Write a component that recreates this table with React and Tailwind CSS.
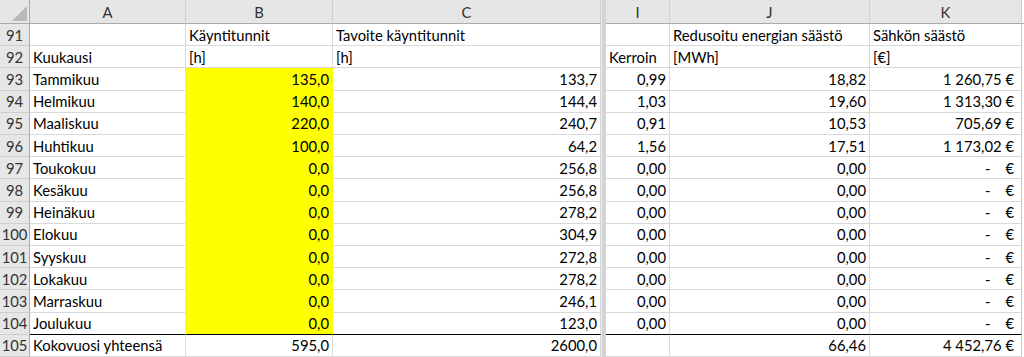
import React from 'react';

const cols = 'grid grid-cols-[30px_156px_147px_268px_5px_64px_200px_152px_2px]';

const rows = [
  { n: 91, a: '', b: 'Käyntitunnit', c: 'Tavoite käyntitunnit', i: '', j: 'Redusoitu energian säästö', k: 'Sähkön säästö', text: true },
  { n: 92, a: 'Kuukausi', b: '[h]', c: '[h]', i: 'Kerroin', j: '[MWh]', k: '[€]', text: true },
  { n: 93, a: 'Tammikuu', b: '135,0', c: '133,7', i: '0,99', j: '18,82', k: '1 260,75 €', fill: true },
  { n: 94, a: 'Helmikuu', b: '140,0', c: '144,4', i: '1,03', j: '19,60', k: '1 313,30 €', fill: true },
  { n: 95, a: 'Maaliskuu', b: '220,0', c: '240,7', i: '0,91', j: '10,53', k: '705,69 €', fill: true },
  { n: 96, a: 'Huhtikuu', b: '100,0', c: '64,2', i: '1,56', j: '17,51', k: '1 173,02 €', fill: true },
  { n: 97, a: 'Toukokuu', b: '0,0', c: '256,8', i: '0,00', j: '0,00', k: '-', fill: true },
  { n: 98, a: 'Kesäkuu', b: '0,0', c: '256,8', i: '0,00', j: '0,00', k: '-', fill: true },
  { n: 99, a: 'Heinäkuu', b: '0,0', c: '278,2', i: '0,00', j: '0,00', k: '-', fill: true },
  { n: 100, a: 'Elokuu', b: '0,0', c: '304,9', i: '0,00', j: '0,00', k: '-', fill: true },
  { n: 101, a: 'Syyskuu', b: '0,0', c: '272,8', i: '0,00', j: '0,00', k: '-', fill: true },
  { n: 102, a: 'Lokakuu', b: '0,0', c: '278,2', i: '0,00', j: '0,00', k: '-', fill: true },
  { n: 103, a: 'Marraskuu', b: '0,0', c: '246,1', i: '0,00', j: '0,00', k: '-', fill: true },
  { n: 104, a: 'Joulukuu', b: '0,0', c: '123,0', i: '0,00', j: '0,00', k: '-', fill: true, thick: true },
  { n: 105, a: 'Kokovuosi yhteensä', b: '595,0', c: '2600,0', i: '', j: '66,46', k: '4 452,76 €' },
];

const Divider = () => (
  <div className="bg-[#d4d4d4] border-l border-[#e8e8e8]"></div>
);

const Cell = ({ children, right, className = '' }) => (
  <div
    className={`flex items-center overflow-hidden whitespace-nowrap border-r border-b px-[3px] ${
      right ? 'justify-end' : 'justify-start'
    } ${className}`}
  >
    {children}
  </div>
);

const Euro = ({ v }) => {
  if (v === '-') {
    return (
      <span className="flex w-full justify-end">
        <span className="mr-[15px]">-</span>
        <span className="mr-[4px]">€</span>
      </span>
    );
  }
  return <span className="mr-[4px]">{v}</span>;
};

export default function App() {
  return (
    <div
      className="w-[1024px] h-[357px] overflow-hidden bg-white flex flex-col text-[14.8px] leading-[18px] text-black"
      style={{ fontFamily: 'Lato, "Liberation Sans", sans-serif' }}
    >
      {/* column headers */}
      <div className={`${cols} h-[24px] shrink-0 bg-[#e6e6e6] text-[#333]`}>
        <div className="relative border-r border-b border-[#ababab]">
          <svg className="absolute right-[2px] bottom-[2px]" width="15" height="15" viewBox="0 0 15 15">
            <polygon points="15,0 15,15 0,15" fill="#b8b8b8" />
          </svg>
        </div>
        {['A', 'B', 'C'].map((l) => (
          <div key={l} className="flex items-center justify-center border-r border-b border-r-[#cfcfcf] border-b-[#ababab]">
            {l}
          </div>
        ))}
        <Divider />
        {['I', 'J', 'K'].map((l) => (
          <div key={l} className="flex items-center justify-center border-r border-b border-r-[#cfcfcf] border-b-[#ababab]">
            {l}
          </div>
        ))}
        <div className="border-b border-[#ababab] bg-white"></div>
      </div>

      {/* rows */}
      <div className="flex-1 min-h-0 flex flex-col">
        {rows.map((r) => {
          const line = r.thick ? 'border-b-black' : 'border-b-[#d9d9d9]';
          return (
            <div key={r.n} className={`${cols} flex-1 min-h-0`}>
              <div className="flex items-center justify-center bg-[#e6e6e6] text-[#333] border-r border-b border-r-[#ababab] border-b-[#cfcfcf]">
                {r.n}
              </div>
              <Cell className={`${line} ${r.fill ? 'border-r-[#ffff00]' : 'border-r-[#d9d9d9]'}`}>{r.a}</Cell>
              <Cell
                right={!r.text}
                className={
                  r.fill
                    ? `bg-[#ffff00] border-r-[#ffff00] ${r.thick ? 'border-b-black' : 'border-b-[#ffff00]'}`
                    : `${line} border-r-[#d9d9d9]`
                }
              >
                {r.b}
              </Cell>
              <Cell right={!r.text} className={`${line} border-r-[#d9d9d9]`}>{r.c}</Cell>
              <Divider />
              <Cell right={!r.text} className={`${line} border-r-[#d9d9d9]`}>{r.i}</Cell>
              <Cell right={!r.text} className={`${line} border-r-[#d9d9d9]`}>{r.j}</Cell>
              <Cell right={!r.text} className={`${line} border-r-[#c8c8c8] px-0 pl-[3px]`}>
                {r.text ? r.k : <Euro v={r.k} />}
              </Cell>
              <div className="bg-white"></div>
            </div>
          );
        })}
      </div>
    </div>
  );
}
